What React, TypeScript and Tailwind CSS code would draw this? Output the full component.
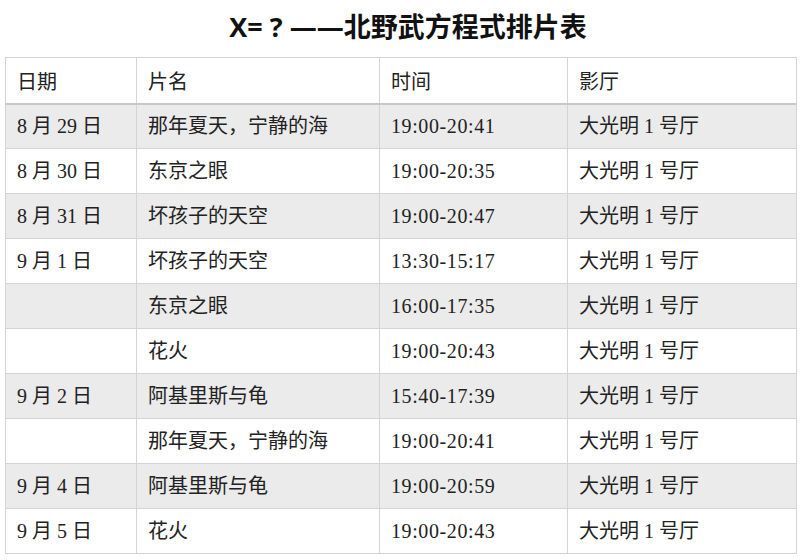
import React from "react";

const rows: [string, string, string, string][] = [
  ["8 月 29 日", "那年夏天，宁静的海", "19:00-20:41", "大光明 1 号厅"],
  ["8 月 30 日", "东京之眼", "19:00-20:35", "大光明 1 号厅"],
  ["8 月 31 日", "坏孩子的天空", "19:00-20:47", "大光明 1 号厅"],
  ["9 月 1 日", "坏孩子的天空", "13:30-15:17", "大光明 1 号厅"],
  ["", "东京之眼", "16:00-17:35", "大光明 1 号厅"],
  ["", "花火", "19:00-20:43", "大光明 1 号厅"],
  ["9 月 2 日", "阿基里斯与龟", "15:40-17:39", "大光明 1 号厅"],
  ["", "那年夏天，宁静的海", "19:00-20:41", "大光明 1 号厅"],
  ["9 月 4 日", "阿基里斯与龟", "19:00-20:59", "大光明 1 号厅"],
  ["9 月 5 日", "花火", "19:00-20:43", "大光明 1 号厅"],
];

export default function App() {
  return (
    <div className="w-[800px] h-[560px] bg-white overflow-hidden">
      <div
        className="h-[57px] flex items-center justify-center pl-[16px] text-[27px] font-bold text-[#111] pb-[2px]"
        style={{ fontFamily: '"Open Sans", "Noto Sans CJK SC", sans-serif' }}
      >
        X= ? ——北野武方程式排片表
      </div>
      <table
        className="ml-[5px] w-[791px] table-fixed border-collapse text-[20px] text-[#222]"
        style={{ fontFamily: '"Liberation Serif", "Noto Sans CJK SC", serif' }}
      >
        <colgroup>
          <col className="w-[131px]" />
          <col className="w-[243px]" />
          <col className="w-[188px]" />
          <col className="w-[229px]" />
        </colgroup>
        <thead>
          <tr className="h-[46px] bg-white">
            {["日期", "片名", "时间", "影厅"].map((h) => (
              <th
                key={h}
                className="border border-[#d4d4d4] border-b-2 border-b-[#c8c8c8] px-[11px] pt-[3px] text-left font-normal"
              >
                {h}
              </th>
            ))}
          </tr>
        </thead>
        <tbody>
          {rows.map((r, i) => (
            <tr key={i} className={i % 2 === 0 ? "h-[45px] bg-[#ebebeb]" : "h-[45px] bg-white"}>
              {r.map((c, j) => (
                <td
                  key={j}
                  className={
                    j === 2
                      ? "border border-[#d4d4d4] px-[11px] tracking-[0.6px]"
                      : "border border-[#d4d4d4] px-[11px]"
                  }
                >
                  {c}
                </td>
              ))}
            </tr>
          ))}
        </tbody>
      </table>
    </div>
  );
}
